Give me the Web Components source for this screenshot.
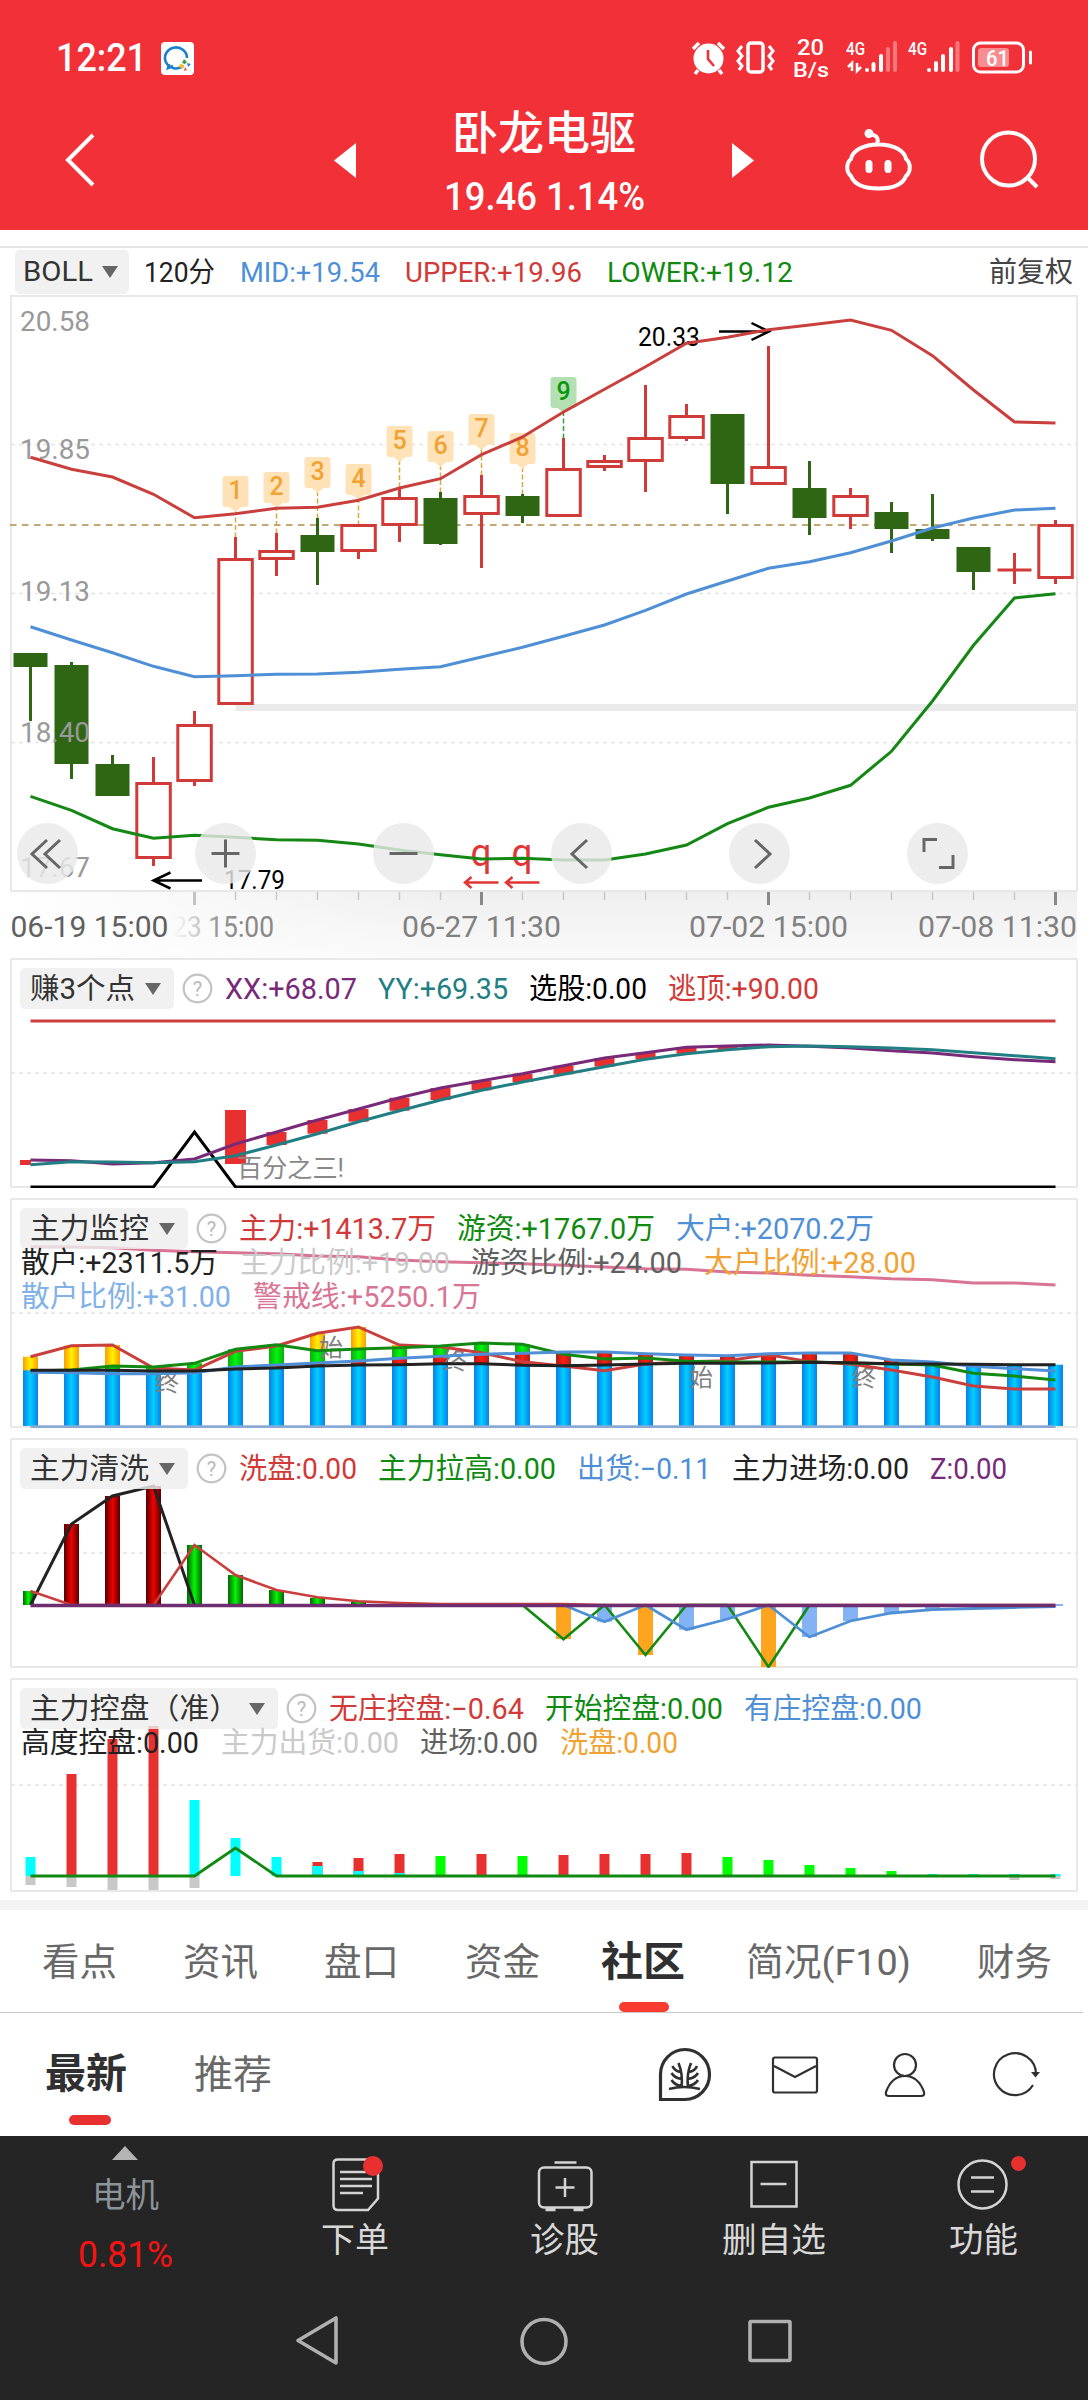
<!DOCTYPE html>
<html lang="zh-CN">
<head>
<meta charset="utf-8">
<title>卧龙电驱</title>
<style>
    body {
        margin: 0;
        width: 1088px;
        background: #fff;
        font-family: Roboto, "Noto Sans CJK SC", sans-serif;
        color: #333;
    }
    .red { color: #d03a38; }
    .green { color: #108a10; }
    .blue { color: #4f8fd6; }
    .sky { color: #82b1e8; }
    .purple { color: #782a78; }
    .teal { color: #217f84; }
    .black { color: #222; }
    .gray { color: #cacaca; }
    .dim { color: #606060; }
    .orange { color: #f0a232; }
    .pink { color: #d97494; }
</style>
</head>
<body>
<status-bar></status-bar>
<quote-header>
    <fit-text slot="name" w="184">卧龙电驱</fit-text>
    <fit-text slot="price" w="201">19.46 1.14%</fit-text>
</quote-header>
<boll-bar>
    <fit-text slot="chip" w="70">BOLL</fit-text>
    <fit-text w="71" class="black">120分</fit-text>
    <fit-text w="140" class="blue">MID:+19.54</fit-text>
    <fit-text w="177" class="red">UPPER:+19.96</fit-text>
    <fit-text w="186" class="green">LOWER:+19.12</fit-text>
    <fit-text slot="end" w="84">前复权</fit-text>
</boll-bar>
<candle-chart></candle-chart>
<date-axis></date-axis>

<indicator-panel kind="earn" height="230">
    <fit-text slot="chip" w="105">赚3个点</fit-text>
    <fit-text slot="row1" w="132" class="purple">XX:+68.07</fit-text>
    <fit-text slot="row1" w="130" class="teal">YY:+69.35</fit-text>
    <fit-text slot="row1" w="118" style="color:#000">选股:0.00</fit-text>
    <fit-text slot="row1" w="151" class="red">逃顶:+90.00</fit-text>
</indicator-panel>
<indicator-panel kind="monitor" height="230">
    <fit-text slot="chip" w="119">主力监控</fit-text>
    <fit-text slot="row1" w="197" class="red">主力:+1413.7万</fit-text>
    <fit-text slot="row1" w="198" class="green">游资:+1767.0万</fit-text>
    <fit-text slot="row1" w="198" class="blue">大户:+2070.2万</fit-text>
    <fit-text slot="row2" w="197" class="black">散户:+2311.5万</fit-text>
    <fit-text slot="row2" w="210" class="gray">主力比例:+19.00</fit-text>
    <fit-text slot="row2" w="211" class="dim">游资比例:+24.00</fit-text>
    <fit-text slot="row2" w="212" class="orange">大户比例:+28.00</fit-text>
    <fit-text slot="row3" w="210" class="sky">散户比例:+31.00</fit-text>
    <fit-text slot="row3" w="228" class="pink">警戒线:+5250.1万</fit-text>
</indicator-panel>
<indicator-panel kind="wash" height="230">
    <fit-text slot="chip" w="119">主力清洗</fit-text>
    <fit-text slot="row1" w="118" class="red">洗盘:0.00</fit-text>
    <fit-text slot="row1" w="178" class="green">主力拉高:0.00</fit-text>
    <fit-text slot="row1" w="134" class="blue">出货:−0.11</fit-text>
    <fit-text slot="row1" w="177" class="black">主力进场:0.00</fit-text>
    <fit-text slot="row1" w="77" class="purple">Z:0.00</fit-text>
</indicator-panel>
<indicator-panel kind="control" height="214">
    <fit-text slot="chip" w="209">主力控盘（准）</fit-text>
    <fit-text slot="row1" w="195" class="red">无庄控盘:−0.64</fit-text>
    <fit-text slot="row1" w="178" class="green">开始控盘:0.00</fit-text>
    <fit-text slot="row1" w="178" class="blue">有庄控盘:0.00</fit-text>
    <fit-text slot="row2" w="178" class="black">高度控盘:0.00</fit-text>
    <fit-text slot="row2" w="178" class="gray">主力出货:0.00</fit-text>
    <fit-text slot="row2" w="118" class="dim">进场:0.00</fit-text>
    <fit-text slot="row2" w="118" class="orange">洗盘:0.00</fit-text>
</indicator-panel>

<tab-strip>
    <fit-text w="75">看点</fit-text>
    <fit-text w="75">资讯</fit-text>
    <fit-text w="75">盘口</fit-text>
    <fit-text w="75">资金</fit-text>
    <fit-text w="84" active>社区</fit-text>
    <fit-text w="165">简况(F10)</fit-text>
    <fit-text w="75">财务</fit-text>
</tab-strip>
<feed-bar>
    <fit-text w="82" active>最新</fit-text>
    <fit-text w="78">推荐</fit-text>
</feed-bar>
<bottom-bar></bottom-bar>
<nav-bar></nav-bar>

<script>
const X0 = 30.5;
const STEP = 41;
const px = i => X0 + STEP * i;

// polyline through one y value per bar, starting at bar `from`
const line = (ys, color, width = 3, from = 0) =>
    `<polyline fill="none" stroke="${color}" stroke-width="${width}" points="${ys.map((y, i) => `${px(i + from)},${y}`).join(' ')}"/>`;

const bar = (i, top, bottom, w, fill) =>
    `<rect x="${px(i) - w / 2}" y="${top}" width="${w}" height="${Math.max(0, bottom - top)}" fill="${fill}"/>`;

const text = (x, y, w, size, fill, str, extra = '') =>
    `<text x="${x}" y="${y}" textLength="${w}" lengthAdjust="spacingAndGlyphs" font-size="${size}" fill="${fill}" ${extra}>${str}</text>`;

function define(name, html, after) {
    const template = document.createElement('template');
    template.innerHTML = html;
    customElements.define(name, class extends HTMLElement {
        constructor() {
            super();
            this.attachShadow({ mode: 'open' }).append(template.content.cloneNode(true));
        }
        connectedCallback() {
            if (after) after(this, this.shadowRoot);
        }
    });
}

define('status-bar', `
    <style>
        :host { display: block; height: 100px; background: #f23037; color: #fff; }
        .row { display: flex; align-items: center; height: 116px; padding: 0 56px 0 56px; box-sizing: border-box; }
        .time { font-size: 38.5px; font-weight: 500; line-height: 40px; }
        .chat { margin-left: 14px; }
        .right { margin-left: auto; display: block; }
    </style>
    <div class="row">
        <fit-text class="time" w="91">12:21</fit-text>
        <svg class="chat" width="33" height="33" viewBox="0 0 33 33">
            <rect width="33" height="33" rx="4" fill="#fff"/>
            <path d="M22 24a11 10.5 0 1 1 4-8M8 22l-1 4 5-2" fill="none" stroke="#1b7fd0" stroke-width="2.6"/>
            <path d="M23 17l3 3-2 2-3-1z" fill="#3b9c40"/><path d="M26 21l4 1-3 3z" fill="#2a7fd5"/>
            <path d="M19 22l4 1-1 4-4-2z" fill="#f2b72c"/><path d="M24 25l2 3-3 1z" fill="#e2563c"/>
        </svg>
        <svg class="right" width="342" height="60" viewBox="690 28 342 60" fill="#fff">
            <circle cx="708.5" cy="58.5" r="15"/>
            <path d="M708 50v9l6 7" fill="none" stroke="#f23037" stroke-width="2.6"/>
            <path d="M693 49l6-6M724 49l-6-6M698 70l-3 4M719 70l3 4" stroke="#fff" stroke-width="3.5" fill="none"/>
            <g fill="none" stroke="#fff" stroke-width="3.5">
                <rect x="748" y="43" width="15" height="29" rx="3"/>
                <path d="M742 46l-4 5 4 5-4 5 4 5-3 4M769 46l4 5-4 5 4 5-4 5 3 4" stroke-width="3"/>
            </g>
            <text x="797" y="54.5" font-size="22" font-weight="500" textLength="27" lengthAdjust="spacingAndGlyphs">20</text>
            <text x="793" y="76.5" font-size="21" font-weight="500" textLength="36" lengthAdjust="spacingAndGlyphs">B/s</text>
            <text x="846" y="55" font-size="18" font-weight="500" textLength="19" lengthAdjust="spacingAndGlyphs">4G</text>
            <text x="908" y="55" font-size="18" font-weight="500" textLength="19" lengthAdjust="spacingAndGlyphs">4G</text>
            <path d="M852 71v-8l-4 4M857 63v8l4-4" fill="none" stroke="#fff" stroke-width="2.5"/>
            <g stroke="#fff" stroke-width="4" stroke-linecap="round">
                <path d="M867 70v0M873.5 70v-6M881 70v-14"/><path d="M888 70v-21M895 70v-27" opacity=".35"/>
                <path d="M929 70v0M936 70v-7M943 70v-14M951 70v-21"/><path d="M957.5 70v-27" opacity=".35"/>
            </g>
            <rect x="973.5" y="43" width="50" height="29" rx="7" fill="none" stroke="#fff" stroke-width="3"/>
            <rect x="978" y="48" width="31" height="19" rx="3" opacity=".45"/>
            <path d="M1030.5 52v11" stroke="#fff" stroke-width="3" stroke-linecap="round"/>
            <text x="986" y="66" font-size="22" font-weight="500" textLength="23" lengthAdjust="spacingAndGlyphs">61</text>
        </svg>
    </div>
`);

define('quote-header', `
    <style>
        :host { display: block; height: 130px; background: #f23037; color: #fff; }
        .row { display: flex; align-items: center; height: 120px; box-sizing: border-box; padding-left: 62px; }
        .title { width: 204px; display: flex; flex-direction: column; align-items: center; margin: 4px 86px 0; }
        .name { font-size: 46px; line-height: 62px; font-weight: 500; }
        .price { font-size: 39px; line-height: 50px; font-weight: 500; margin-top: 8px; }
        svg { display: block; flex: none; }
    </style>
    <div class="row">
        <svg width="36" height="56" viewBox="0 0 36 56"><path d="M31 3L6 28l25 25" fill="none" stroke="#fff" stroke-width="4"/></svg>
        <svg style="margin-left:236px" width="22" height="35" viewBox="0 0 22 35"><path d="M22 0v35L0 17.5z" fill="#fff"/></svg>
        <div class="title"><div class="name"><slot name="name"></slot></div><div class="price"><slot name="price"></slot></div></div>
        <svg width="22" height="35" viewBox="0 0 22 35"><path d="M0 0v35l22-17.5z" fill="#fff"/></svg>
        <svg style="margin-left:89px" width="70" height="64" viewBox="843 127 70 64" fill="none" stroke="#fff" stroke-width="4">
            <path d="M877 143c2-6 0-9-8-10" stroke-linecap="round"/><circle cx="869" cy="132.5" r="2.5" fill="#fff"/>
            <path d="M878.5 143.500c-15 0-26 6-27.500 14.500-5 4-5 13 0 17 3 8 12 12.500 27.500 12.500s24.500-4.500 27.500-12.500c5-4 5-13 0-17-1.500-8.500-12.500-14.500-27.500-14.500z"/>
            <path d="M869 162.500v6M888 162.500v6" stroke-width="7" stroke-linecap="round"/>
        </svg>
        <svg style="margin-left:65px" width="62" height="62" viewBox="976 129 62 62" fill="none" stroke="#fff" stroke-width="4">
            <circle cx="1006.5" cy="159" r="26.5"/><path d="M1025 177l10 10"/>
        </svg>
    </div>
`);

const chipCss = `
    .chip { display: flex; align-items: center; box-sizing: border-box; background: rgba(238,238,238,.82); border-radius: 5px; color: #333; }
    .chip i { width: 0; height: 0; border: 8.5px solid transparent; border-top: 12px solid #666; border-bottom: 0; }
`;

define('boll-bar', `
    <style>
        ${chipCss}
        :host { display: flex; align-items: center; box-sizing: border-box; height: 66px; padding: 19px 15px 0 15px; font-size: 28.5px; line-height: 40px; background: linear-gradient(#e6e6e6, #e6e6e6) 0 16px / 100% 2px no-repeat; }
        .chip { width: 114px; height: 44px; padding-left: 8px; gap: 9px; margin-top: -1px; }
        .items { display: flex; gap: 25px; margin-left: 15px; }
        .end { margin-left: auto; color: #444; }
    </style>
    <div class="chip"><slot name="chip"></slot><i></i></div>
    <div class="items"><slot></slot></div>
    <div class="end"><slot name="end"></slot></div>
`);

// [high, top, bottom, low, up]
const candles = [
    [653, 653, 667, 721, 0], [662, 665, 764, 779, 0], [755, 764, 796, 796, 0], [757, 782, 859, 866, 1], [711, 724, 782, 786, 1],
    [537, 558, 705, 705, 1], [533, 550, 560, 576, 1], [518, 535, 552, 585, 0], [524, 524, 552, 559, 1], [487, 497, 526, 542, 1],
    [492, 498, 544, 545, 0], [475, 495, 515, 568, 1], [494, 496, 516, 523, 0], [438, 468, 517, 517, 1], [455, 460, 468, 471, 1],
    [385, 437, 462, 492, 1], [404, 415, 439, 441, 1], [414, 414, 484, 514, 0], [346, 466, 485, 485, 1], [461, 488, 518, 535, 0],
    [488, 495, 517, 529, 1], [502, 512, 529, 553, 0], [494, 529, 539, 541, 0], [547, 547, 572, 590, 0], [553, 568.5, 571.5, 584, 1],
    [520, 524, 579, 584, 1]
];
const upper = [457.3, 469.3, 477, 494.3, 517.7, 513.7, 508.3, 507.3, 500.3, 488, 478.7, 454.7, 437, 412, 389.3, 366.7, 343.3, 337.3, 329.7, 325, 320, 330.3, 355.7, 390, 422, 423];
const middle = [626.7, 640, 652.7, 666.3, 676.7, 675.7, 674.3, 674, 672.3, 669.3, 666.7, 657, 647.3, 636.3, 625, 610.3, 594, 581, 568.3, 561.7, 552.7, 541, 528, 518, 510, 508.3];
const lower = [796.3, 810.3, 828.7, 838.3, 835.3, 837.3, 839.7, 840.3, 844, 850, 854.7, 859, 858.3, 860, 860, 854, 845, 823.7, 807.3, 798, 785.3, 751.3, 701, 645.3, 598, 593.7];
// top of each counting flag, from bar 5 on
const flags = [476, 472, 457, 464, 426, 431, 414, 433, 377];

function candle([high, top, bottom, low, up], i) {
    const x = px(i);
    if (!up) return bar(i, high, low, 3, '#2f6614') + bar(i, top, bottom, 34, '#2f6614');
    if (bottom - top < 4) return bar(i, high, low, 3, '#d03a38') + bar(i, top, bottom, 34, '#d03a38');
    return bar(i, high, top, 3, '#d03a38') + bar(i, bottom, low, 3, '#d03a38') +
        `<rect x="${x - 16.7}" y="${top + 1.5}" width="33.5" height="${bottom - top - 3}" fill="#fff" stroke="#d03a38" stroke-width="3"/>`;
}

function flag(y, k) {
    const i = k + 5, x = px(i), last = k === 8;
    const fill = last ? '#b3dfb3' : '#ffe2b8', ink = last ? '#0c960c' : '#f0a232';
    return `<path d="M${x} ${y + 34}V${candles[i][0]}" stroke="${last ? '#3a9a3a' : '#d8a93e'}" stroke-width="1.5" stroke-dasharray="5 2.5"/>
        <path d="M${x - 10} ${y}h20q3 0 3 3v25q0 3-3 3h-4l-6 5-6-5h-4q-3 0-3-3v-25q0-3 3-3z" fill="${fill}"/>
        <text x="${x}" y="${y + 22.5}" text-anchor="middle" font-size="25" font-weight="500" fill="${ink}">${k + 1}</text>`;
}

const grid = (y, dash = '4 4') => `<path d="M11 ${y}H1077" stroke="#e4e4e4" stroke-width="1.5" stroke-dasharray="${dash}"/>`;

define('candle-chart', `
    <style>
        :host { display: grid; height: 596px; }
        .plot, .tools { grid-area: 1 / 1; }
        .plot { overflow: visible; }
        .tools { display: flex; gap: 117px; align-self: end; margin: 0 0 8px 17px; }
        .tools svg { width: 61px; height: 61px; border-radius: 50%; background: rgba(233,233,233,.82); }
    </style>
    <svg class="plot" width="1088" height="596" viewBox="0 296 1088 596"></svg>
    <div class="tools">
        <svg viewBox="0 0 61 61"><path d="M30 17L15 31l15 14M43 17L28 31l15 14"/></svg>
        <svg viewBox="0 0 61 61"><path d="M16.5 30.5h28M30.5 16.5v28"/></svg>
        <svg viewBox="0 0 61 61"><path d="M16.5 30.5h28"/></svg>
        <svg viewBox="0 0 61 61"><path d="M36 17L21 31l15 14"/></svg>
        <svg viewBox="0 0 61 61"><path d="M26 17l15 14-15 14"/></svg>
        <svg viewBox="0 0 61 61"><path d="M17 29V16.5h13M46 32v12.5H32"/></svg>
    </div>
`, (el, root) => {
    root.querySelectorAll('.tools path').forEach(p => {
        p.setAttribute('fill', 'none');
        p.setAttribute('stroke', '#666');
        p.setAttribute('stroke-width', '3');
    });
    const q = i => text(px(i) - 11, 866, 21, 38, '#df3636', 'q') +
        `<path d="M${px(i) + 17} 882.5h-33M${px(i) - 10} 877l-6.5 5.5 6.5 5.5" fill="none" stroke="#df3636" stroke-width="2.5"/>`;
    const prices = [['20.58', 331], ['19.85', 458.5], ['19.13', 600.5], ['18.40', 742], ['17.67', 877]];
    root.querySelector('.plot').innerHTML =
        '<rect x="11" y="296" width="1066" height="595" fill="none" stroke="#e8e8e8" stroke-width="2"/>' +
        grid(444.5) + grid(593.5) + grid(742.5) +
        '<path d="M10 525H1077" stroke="#c5a774" stroke-width="2" stroke-dasharray="6.5 5.5"/>' +
        '<rect x="235.5" y="704" width="841.5" height="7" fill="#eaeaea"/>' +
        flags.map(flag).join('') +
        candles.map(candle).join('') +
        prices.map(([p, y]) => text(20, y, 70, 28.5, '#999', p)).join('') +
        text(638, 346, 62, 26, '#000', '20.33') +
        '<path d="M719 331.5h49M751.5 323l17.5 8.5-17.5 8.5" fill="none" stroke="#000" stroke-width="2.5"/>' +
        text(224, 889, 61, 25, '#000', '17.79') +
        '<path d="M202 880.5h-48M170.5 872.5l-17 8 17 8" fill="none" stroke="#000" stroke-width="2.5"/>' +
        q(11) + q(12) +
        line(middle, '#4f8fd6') + line(upper, '#c93f3d') + line(lower, '#148714');
});

define('date-axis', `
    <style>:host { display: block; height: 66px; } svg { display: block; }</style>
    <svg width="1088" height="66" viewBox="0 892 1088 66"></svg>
`, (el, root) => {
    let ticks = '';
    for (let i = 4; i < 26; i++) {
        const major = (i - 4) % 7 === 0;
        ticks += bar(i, 892, major ? 905 : 900, major ? 3 : 1.5, i === 4 ? '#c4c4c4' : major ? '#888' : '#c8c8c8');
    }
    root.querySelector('svg').innerHTML = `
        <defs>
            <linearGradient id="v" x2="0" y2="1"><stop stop-color="#efefef"/><stop offset="1" stop-color="#fafafa"/></linearGradient>
            <linearGradient id="h"><stop stop-color="#fff"/><stop offset="1" stop-color="#fff" stop-opacity="0"/></linearGradient>
            <linearGradient id="t" gradientUnits="userSpaceOnUse" x1="172" x2="240"><stop stop-color="#fff"/><stop offset=".35" stop-color="#d0d0d0"/><stop offset=".65" stop-color="#999"/><stop offset="1" stop-color="#888"/></linearGradient>
        </defs>
        <rect x="11" y="892" width="1066" height="66" fill="url(#v)"/>
        <rect x="10" y="892" width="430" height="66" fill="url(#h)"/>` + ticks +
        text(172, 937, 102, 29, 'url(#t)', '23 15:00') +
        text(10.5, 937, 158, 29, '#606060', '06-19 15:00') +
        text(402, 937, 159, 29, '#808080', '06-27 11:30') +
        text(689, 937, 159, 29, '#808080', '07-02 15:00') +
        text(918, 937, 159, 29, '#808080', '07-08 11:30');
});

const shade = (id, edge, core) => `<linearGradient id="${id}"><stop stop-color="${edge}"/><stop offset=".5" stop-color="${core}"/><stop offset="1" stop-color="${edge}"/></linearGradient>`;
const flat = (y, n = 26) => Array(n).fill(y);

const charts = {
    earn() {
        const xx = [1160, 1160.7, 1164, 1162.7, 1159, 1144, 1132, 1120, 1109, 1097.7, 1088, 1080.7, 1073.7, 1065.7, 1058, 1052.7, 1047.3, 1046, 1045, 1046.3, 1048, 1050.7, 1053, 1056.7, 1059.7, 1061.7];
        const yy = [1164.7, 1161.7, 1162, 1162.7, 1161.7, 1155.7, 1145, 1133.7, 1121.7, 1110.7, 1100, 1090.3, 1082, 1074.3, 1066.7, 1059.3, 1053.7, 1049.7, 1046.7, 1046, 1046.7, 1048, 1049.7, 1052.7, 1055.7, 1058.7];
        let bars = bar(5, 1110, 1164, 21, '#e83030') + '<rect x="20" y="1160" width="11" height="5" fill="#e83030"/>';
        for (let i = 6; i < 18; i++) bars += bar(i, xx[i], yy[i], 20, '#e83030');
        const sel = flat(1187);
        sel[4] = 1132;
        return bars + line(flat(1021), '#cb3f3f') + line(sel, '#000') +
            line(xx, '#782a78') + line(yy, '#217f84') +
            text(237, 1177, 107, 25, '#888', '百分之三!');
    },
    monitor() {
        const big = [1356.7, 1345.7, 1345, 1368, 1370, 1351.3, 1346, 1333.3, 1327, 1345, 1346.7, 1352.7, 1361.7, 1366, 1370.7, 1364, 1361.7, 1360.7, 1354.7, 1361.7, 1364, 1370, 1377, 1386, 1389, 1389];
        const hot = [1371, 1370, 1366, 1367, 1363.3, 1349.3, 1344.7, 1350.7, 1349, 1347.7, 1346, 1343, 1344.3, 1354.3, 1359, 1358, 1361.3, 1362, 1362, 1362, 1363, 1364, 1365, 1373.3, 1376, 1380];
        const large = [1372.3, 1372.7, 1373.7, 1373.7, 1372.7, 1367, 1365, 1363, 1361, 1358.3, 1356.3, 1354.3, 1353.3, 1352, 1352, 1353.7, 1355, 1355.7, 1353.7, 1353, 1353, 1360, 1362, 1366.3, 1368.7, 1371];
        const small = [1370.3, 1370.3, 1370.3, 1371, 1371, 1369, 1368, 1366, 1365, 1364.7, 1363.7, 1363.7, 1365.3, 1365.7, 1365, 1364, 1363.3, 1363.3, 1363, 1362.3, 1362.7, 1363.7, 1364, 1364.3, 1364.7, 1364.7];
        const alarm = [1246.7, 1247, 1247.7, 1250.3, 1251.7, 1252.7, 1253.7, 1256, 1256.7, 1260, 1261.7, 1262.7, 1263.7, 1265.3, 1267, 1268.7, 1269.3, 1272, 1273, 1275.3, 1276.7, 1278.7, 1279.7, 1283, 1283, 1285];
        // shorter holders painted over the taller ones
        const layers = [[big, 'y'], [hot, 'g'], [large, 'r'], [small, 'b']];
        const marks = [[155, 1391, '终'], [319, 1356, '始'], [442.5, 1369, '终'], [689, 1386, '始'], [852, 1386, '终']];
        return `<defs>${shade('y', '#ff9c00', '#fff200')}${shade('g', '#0cae0c', '#00f410')}${shade('r', '#aa2018', '#ff1c10')}${shade('b', '#0a7fea', '#00cfff')}</defs>` +
            layers.map(([ys, id]) => ys.map((y, i) => bar(i, y, 1426, 15, `url(#${id})`)).join('')).join('') +
            line(flat(1427), '#8aabd6', 3.6) +
            marks.map(([x, y, s]) => text(x, y, 24, 24, '#808080', s)).join('') +
            line(big, '#c93f3d') + line(hot, '#128a12') + line(large, '#4f8fd6') + line(small, '#222') + line(alarm, '#d97494');
    },
    wash() {
        const z = 1605;
        const wash = [1591, z, z, z, 1545, 1575, 1590, 1597.3, 1601.3, 1603, 1604, 1604, 1604, 1604].concat(flat(z, 12));
        const pull = [z, 1639.3, z, 1655, z, z, 1667, z];
        const sell = [z, 1621.7, z, 1629.7, 1619, z, 1637, 1621, 1613, 1609.7, 1608.5, 1607.5, 1606.5];
        const enter = [z, 1524, 1496, 1486, z];
        return `<defs>${shade('r', '#560000', '#f00000')}${shade('g', '#036403', '#05f505')}</defs>` +
            '<rect x="23" y="1591" width="11" height="14" fill="url(#g)"/>' +
            [1524, 1496, 1486].map((y, i) => bar(i + 1, y, z, 15, 'url(#r)')).join('') +
            [1545, 1575, 1590, 1598, 1601.5].map((y, i) => bar(i + 4, y, z, 15, 'url(#g)')).join('') +
            [[14, 1621.7], [16, 1629.7], [17, 1619], [19, 1637], [20, 1621], [21, 1613], [22, 1609.7]].map(([i, y]) => bar(i, z, y, 15, '#83b3f4')).join('') +
            [[13, 1639], [15, 1655], [18, 1667]].map(([i, y]) => bar(i, z, y, 15, '#ffa41e')).join('') +
            line(enter, '#222') + line(wash, '#c93f3d', 2.6) + line(pull, '#128a12', 2.6, 12) + line(sell, '#4f8fd6', 2.8, 13) +
            line(flat(1605.5), '#6e2d6e', 3.6) +
            '<path d="M1056 1605h7" stroke="#83b3f4" stroke-width="2"/>';
    },
    control() {
        const z = 1876, c = '#00ffff', r = '#e83030', g = '#00ff00';
        const tops = [[0, 1857, c], [1, 1774, r], [2, 1739, r], [3, 1726, r], [4, 1800, c], [5, 1838, c], [6, 1857, c], [7, 1862, r], [7, 1866, c], [8, 1858, r], [8, 1871, c], [9, 1854, r], [9, 1873, c], [10, 1856, g], [11, 1854, r], [12, 1856, g], [13, 1855, r], [14, 1854, r], [15, 1854, r], [16, 1853, r], [17, 1857, g], [18, 1860, g], [19, 1865, g], [20, 1868, g], [21, 1871, g], [22, 1874, c], [23, 1874, c], [24, 1874, c], [25, 1874, c]];
        const tails = [[0, 1885], [1, 1887], [2, 1890], [3, 1890], [4, 1888], [24, 1880], [25, 1879]];
        const start = flat(z);
        start[5] = 1848;
        return tops.map(([i, y, f]) => bar(i, y, z, 10, f)).join('') +
            tails.map(([i, y]) => bar(i, z, y, 10, '#c8c8c8')).join('') +
            line(start, '#128a12', 2.8);
    }
};

const panelTops = { earn: 958, monitor: 1198, wash: 1438, control: 1678 };

define('indicator-panel', `
    <style>
        ${chipCss}
        :host { display: grid; margin-bottom: 10px; font-size: 29px; }
        .plot, .legend { grid-area: 1 / 1; }
        .plot { display: block; }
        .legend { padding: 10px 0 0 20px; line-height: 34px; }
        .row { display: flex; gap: 21.5px; height: 34px; padding-left: 1px; }
        .first { height: 41px; align-items: center; padding: 0; gap: 0; margin-bottom: -3px; }
        .first .items { display: flex; gap: 21px; margin-left: 11.5px; }
        .chip { height: 41px; padding: 1px 13px 0 10px; gap: 10px; }
        .help { margin: 0 0 0 8px; }
    </style>
    <svg class="plot" width="1088"></svg>
    <div class="legend">
        <div class="row first">
            <div class="chip"><slot name="chip"></slot><i></i></div>
            <svg class="help" width="31" height="31" viewBox="0 0 31 31">
                <circle cx="15.5" cy="15.5" r="13.8" fill="none" stroke="#c2c2c2" stroke-width="2.2"/>
                <text x="15.5" y="22.5" text-anchor="middle" font-size="20" fill="#b8b8b8">?</text>
            </svg>
            <div class="items"><slot name="row1"></slot></div>
        </div>
        <div class="row"><slot name="row2"></slot></div>
        <div class="row"><slot name="row3"></slot></div>
    </div>
`, (el, root) => {
    const kind = el.getAttribute('kind');
    const h = Number(el.getAttribute('height'));
    const top = panelTops[kind];
    const plot = root.querySelector('.plot');
    plot.setAttribute('height', h);
    plot.setAttribute('viewBox', `0 ${top} 1088 ${h}`);
    plot.innerHTML = `<rect x="11" y="${top + 1}" width="1066" height="${h - 2}" fill="none" stroke="#e8e8e8" stroke-width="2"/>` +
        grid(top + h / 2) + charts[kind]();
});

define('tab-strip', `
    <style>
        :host { display: block; box-sizing: border-box; height: 112px; margin-top: -2px; border-top: 10px solid #f4f4f4; font-size: 37.5px; color: #686868; --mark: #fa3b30; --mark-w: 50px; --mark-top: 92px; --mark-left: 51%; }
        .row { display: flex; gap: 66px; align-items: center; height: 103px; box-sizing: border-box; padding: 0 0 0 42px; background: linear-gradient(#c6c6c6, #c6c6c6) 0 100% / 1083px 1.5px no-repeat; }
        ::slotted(*) { line-height: 105px; height: 103px; }
        ::slotted([active]) { margin: 0 -5px; font-size: 41px; font-weight: 700; color: #303030; }
    </style>
    <div class="row"><slot></slot></div>
`);

define('feed-bar', `
    <style>
        :host { display: flex; align-items: center; box-sizing: border-box; height: 124px; padding: 0 47px 0 45px; font-size: 38.5px; color: #686868; --mark: #e83030; --mark-w: 42px; --mark-top: 103px; --mark-left: 55%; }
        .tabs { display: flex; gap: 67px; align-items: center; }
        ::slotted(*) { height: 124px; line-height: 125px; }
        ::slotted([active]) { font-size: 41px; font-weight: 700; color: #303030; }
        svg { margin-left: auto; }
    </style>
    <div class="tabs"><slot></slot></div>
    <svg width="384" height="56" viewBox="656 2046 384 56" fill="none" stroke="#303030" stroke-width="2.2">
        <path d="M659.5 2099.5v-25a24.5 25 0 1 1 24.5 25z" stroke-width="3.2"/>
        <path d="M680.5 2088c1-9 0-18-3-25M687 2088c-1-9 0-18 3-25M668 2089q15-4 31 0M679.5 2072q-6-1-8-6M680.5 2079q-7-1-10-6M680.5 2086q-7-1-10-6M688 2072q6-1 8-6M687 2079q7-1 10-6M687 2086q7-1 10-6" stroke-width="2.6"/>
        <rect x="772" y="2057.5" width="44" height="35" rx="2"/><path d="M773 2066l21 11 21-11"/>
        <ellipse cx="904" cy="2065" rx="11" ry="11"/>
        <path d="M904 2076c-9 0-15 5-19 16q-1 4 3 4h32q4 0 3-4c-4-11-10-16-19-16z"/>
        <path d="M1032 2085a21 21 0 1 1 3-11"/><path d="M1030 2072h9l-4.5 5.5z" fill="#303030" stroke="none"/>
    </svg>
`);

define('bottom-bar', `
    <style>
        :host { display: grid; grid-template-columns: 250px 210px 209px 209px 210px; height: 144px; background: #252525; color: #d8d8d8; font-size: 34px; }
        .cell { display: flex; flex-direction: column; align-items: center; box-sizing: border-box; padding-top: 19px; line-height: 42px; }
        .cell svg { display: block; margin-bottom: 4px; overflow: visible; }
        .index { padding-top: 10px; color: #8a9499; }
        .index svg { margin: 0 0 14px; }
        .pct { color: #f41414; margin-top: 18px; font-size: 36px; }
        .ico { fill: none; stroke: #d4d4d4; stroke-width: 2.5; }
    </style>
    <div class="cell index">
        <svg width="26" height="14"><path d="M0 14h26L13 0z" fill="#b4b4b4"/></svg>
        <fit-text w="67">电机</fit-text>
        <fit-text class="pct" w="95">0.81%</fit-text>
    </div>
    <div class="cell">
        <svg class="ico" width="56" height="60" viewBox="327 2155 56 60">
            <path d="M338 2159.5h36q4 0 4 4v35l-10 11.5h-30q-4.5 0-4.5-4.5v-42q0-4 4.5-4z"/>
            <path d="M340 2172h26M340 2179h32M340 2186h32M340 2193h23"/><circle cx="373" cy="2166" r="10" fill="#e83030" stroke="none"/>
        </svg>
        <fit-text w="68">下单</fit-text>
    </div>
    <div class="cell">
        <svg class="ico" width="60" height="60" viewBox="534.5 2155 60 60">
            <path d="M554 2162.5h22"/><rect x="538.5" y="2167.5" width="52.5" height="40" rx="5"/>
            <path d="M564.5 2178v19M555 2187.5h19"/><path d="M545 2209.5h10M573 2209.5h10" stroke-width="3.5"/>
        </svg>
        <fit-text w="69">诊股</fit-text>
    </div>
    <div class="cell">
        <svg class="ico" width="60" height="60" viewBox="743.5 2155 60 60">
            <rect x="751" y="2162" width="45" height="44.5"/><path d="M760 2184h26"/>
        </svg>
        <fit-text w="104">删自选</fit-text>
    </div>
    <div class="cell">
        <svg class="ico" width="60" height="60" viewBox="953 2155 60 60">
            <circle cx="982.5" cy="2184.5" r="24"/><path d="M971 2177.5h23M971 2191.5h23"/>
            <circle cx="1018.5" cy="2163.5" r="7.5" fill="#e83030" stroke="none"/>
        </svg>
        <fit-text w="69">功能</fit-text>
    </div>
`);

define('nav-bar', `
    <style>
        :host { display: flex; justify-content: center; align-items: center; height: 120px; gap: 176px; background: #252525; }
        svg { fill: none; stroke: #b0b0b0; stroke-width: 3.6; stroke-linejoin: round; }
    </style>
    <svg width="50" height="54" viewBox="0 0 50 54"><path d="M43 5v45L5 27.5z"/></svg>
    <svg width="50" height="54" viewBox="0 0 50 54"><circle cx="25" cy="28.5" r="22"/></svg>
    <svg width="50" height="54" viewBox="0 0 50 54"><rect x="5" y="8.5" width="40" height="39" rx="1"/></svg>
`);

// Text squeezed or stretched to a fixed width. Defined last: it measures itself,
// so the elements around it must already have set their font size.
define('fit-text', `
    <style>
        :host { display: inline-block; white-space: nowrap; }
        span { display: inline-block; transform-origin: 0 50%; }
        i { display: none; }
        :host([active]) { position: relative; }
        :host([active]) i { display: block; position: absolute; left: var(--mark-left); top: var(--mark-top); width: var(--mark-w); height: 10px; border-radius: 5px; background: var(--mark); transform: translateX(-50%); }
    </style>
    <span><slot></slot></span><i></i>
`, (el, root) => {
    const w = Number(el.getAttribute('w'));
    const span = root.querySelector('span');
    el.style.width = w + 'px';
    span.style.transform = `scaleX(${w / span.getBoundingClientRect().width})`;
});
</script>
</body>
</html>
